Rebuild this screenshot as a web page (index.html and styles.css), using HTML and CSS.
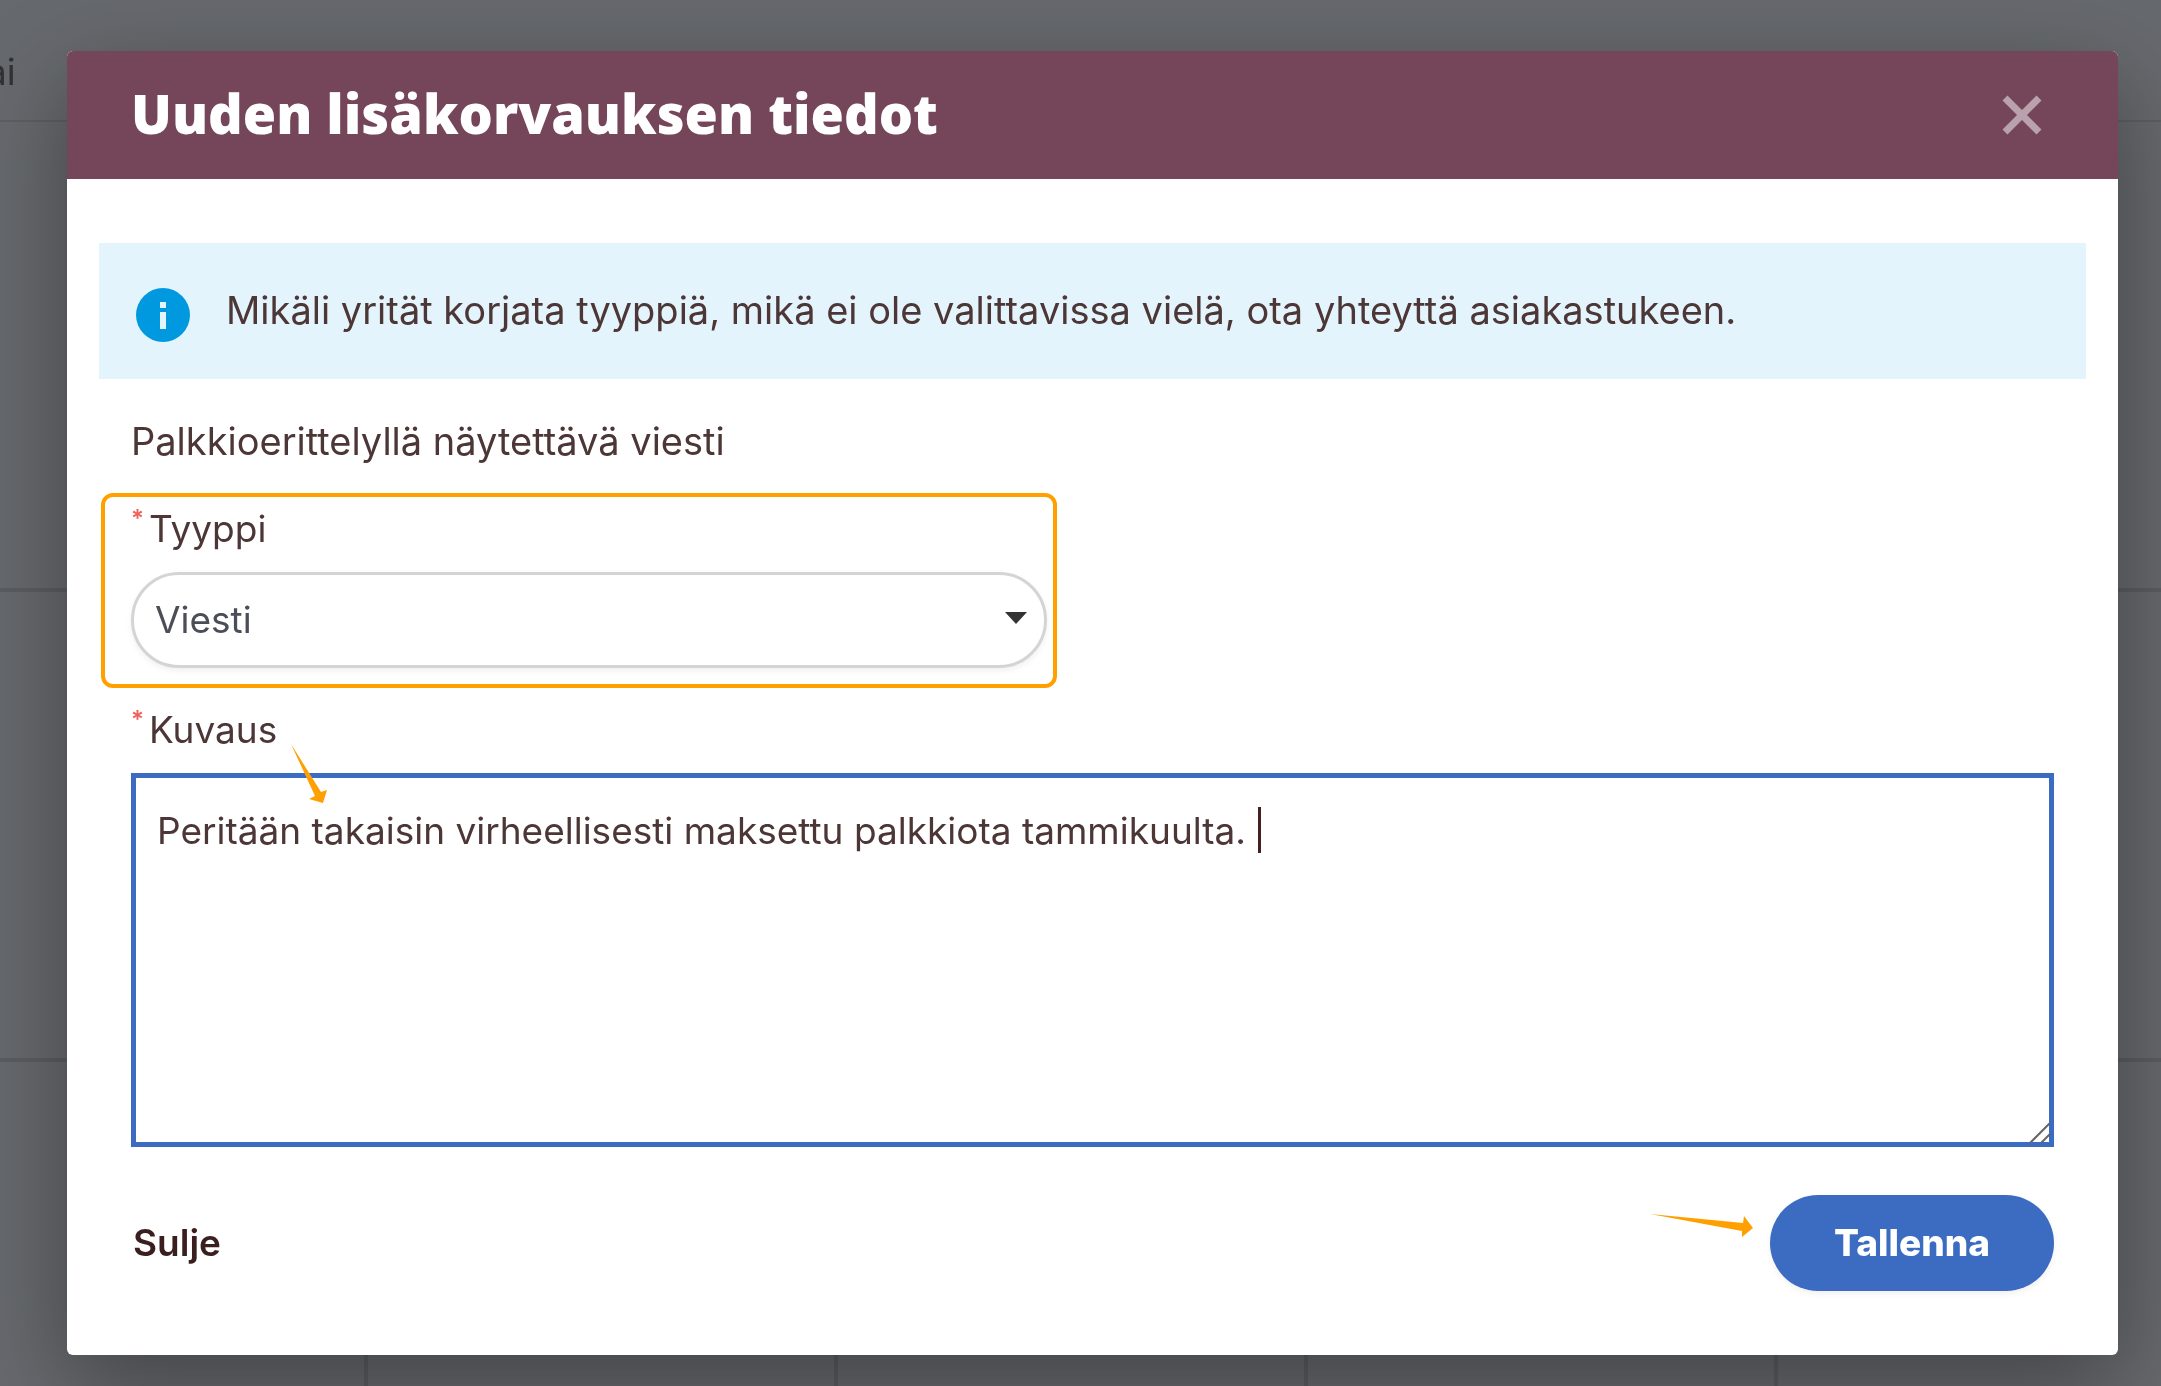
FILE: index.html
```html
<!DOCTYPE html>
<html lang="fi">
<head>
    <meta charset="UTF-8">
    <meta name="viewport" content="width=device-width, initial-scale=1.0">
    <title>Uuden lisäkorvauksen tiedot</title>
    <link rel="stylesheet" href="styles.css">
</head>
<body>
    <!-- Kalenteri taustalla -->
    <div class="calendar" aria-hidden="true">
        <div class="calendar-head"><span>ai</span></div>
        <div class="calendar-row"></div>
        <div class="calendar-row"></div>
        <div class="calendar-row calendar-days"></div>
    </div>

    <div class="modal" role="dialog" aria-labelledby="modalTitle">
        <div class="modal-header">
            <h1 id="modalTitle">Uuden lisäkorvauksen tiedot</h1>
            <button type="button" class="close" aria-label="Sulje">
                <svg viewBox="0 0 40 40" width="40" height="40">
                    <path d="M3 3 L37 37 M37 3 L3 37"/>
                </svg>
            </button>
        </div>
        <form class="modal-body">
            <div class="alert">
                <svg class="alert-icon" viewBox="0 0 54 54" width="54" height="54">
                    <circle cx="27" cy="27" r="27"/>
                    <path d="M24 14h6v6h-6z M24 24h6v17h-6z"/>
                </svg>
                <p>Mikäli yrität korjata tyyppiä, mikä ei ole valittavissa vielä, ota yhteyttä asiakastukeen.</p>
            </div>
            <p class="info">Palkkioerittelyllä näytettävä viesti</p>

            <div class="field highlight">
                <label for="type"><span class="required">*</span>Tyyppi</label>
                <div class="select">
                    <select id="type">
                        <option>Viesti</option>
                    </select>
                    <svg class="select-arrow" viewBox="0 0 22 12" width="22" height="12"><path d="M0 0h22L11 12z"/></svg>
                </div>
            </div>

            <div class="field description">
                <label for="description"><span class="required">*</span>Kuvaus</label>
                <textarea id="description">Peritään takaisin virheellisesti maksettu palkkiota tammikuulta.</textarea>
                <svg class="arrow-down" viewBox="0 0 36 60" width="36" height="60"><path d="M0 0L30 48L36 46L32 59L18 55L24 52Z"/></svg>
                <span class="caret"></span>
                <svg class="grip" viewBox="0 0 22 22" width="22" height="22"><path d="M1 21L21 1M12 21L21 12"/></svg>
            </div>

            <div class="modal-footer">
                <button type="button" class="btn-link">Sulje</button>
                <svg class="arrow-right" viewBox="0 0 104 24" width="104" height="24"><path d="M0 0L93 9L94 2L103 14L92 23L92 17Z"/></svg>
                <button type="submit" class="btn-primary">Tallenna</button>
            </div>
        </form>
    </div>
</body>
</html>
```
FILE: styles.css
```css
* {
    box-sizing: border-box;
}
body {
    margin: 0;
    min-height: 100vh;
    padding: 51px 43px 32px 67px;
    font-family: Inter, "Liberation Sans", sans-serif;
    font-size: 37px;
    line-height: 48px;
    color: #4c3636;
    background-color: #66696d;
    overflow: hidden;
}
h1, p {
    margin: 0;
}
button, select, textarea {
    font: inherit;
    color: inherit;
}

/* calendar behind the dialog */
.calendar {
    position: fixed;
    inset: 0;
    color: #303236;
}
.calendar-head {
    height: 122px;
    padding-top: 48px;
    border-bottom: 2px solid #5c5f63;
}
.calendar-head span {
    display: block;
    margin-left: -14px;
}
.calendar-row {
    height: 470px;
    border-bottom: 4px solid #5a5d61;
}
.calendar-days {
    background: repeating-linear-gradient(to right, transparent 0 466px, #5a5d61 466px 470px) -102px 0;
}

.modal {
    position: relative;
    background-color: #fff;
    border-radius: 6px;
    box-shadow: 0 32px 96px rgba(0, 0, 0, 0.35);
}
.modal-header {
    display: flex;
    align-items: center;
    justify-content: space-between;
    height: 128px;
    padding: 0 76px 0 64px;
    border-radius: 6px 6px 0 0;
    background-color: #754559;
    color: #fff;
}
.modal-header h1 {
    padding-bottom: 4px;
    font-family: "Noto Sans", sans-serif;
    font-size: 54px;
    font-weight: 900;
    line-height: 72px;
}
.close {
    display: flex;
    padding: 0;
    border: none;
    background: none;
    cursor: pointer;
}
.close path {
    fill: none;
    stroke: #baa2ac;
    stroke-width: 7;
}

.modal-body {
    padding: 64px;
}
.alert {
    display: flex;
    align-items: center;
    gap: 36px;
    height: 136px;
    margin: 0 -32px;
    padding: 8px 37px 0;
    background-color: #e4f4fc;
}
.alert p {
    padding-bottom: 10px;
}
.alert p, .info {
    font-size: 38px;
}
.alert-icon {
    flex: none;
}
.alert-icon circle {
    fill: #0099e0;
}
.alert-icon path {
    fill: #e4f4fc;
}
.info {
    margin-top: 38px;
}

.field label {
    display: flex;
    gap: 5px;
}
.required {
    font-size: 24px;
    font-weight: 600;
    line-height: 28px;
    color: #f0605c;
}
.highlight {
    width: 956px;
    max-width: 100%;
    margin: 28px 0 0 -30px;
    padding: 8px 6px 16px 26px;
    border: 4px solid #ffa000;
    border-radius: 12px;
}
.select {
    position: relative;
    margin-top: 19px;
}
.select select {
    display: block;
    width: 100%;
    height: 96px;
    padding: 0 21px;
    border: 3px solid #d4d4d4;
    border-radius: 48px;
    background-color: #fff;
    color: #4b4d57;
    box-shadow: 0 3px 6px rgba(0, 0, 0, 0.06);
    appearance: none;
}
.select-arrow {
    position: absolute;
    top: 40px;
    right: 20px;
    fill: #333;
    pointer-events: none;
}
.description {
    position: relative;
    margin-top: 18px;
}
.description textarea {
    display: block;
    width: 100%;
    height: 374px;
    margin-top: 19px;
    padding: 29px 21px;
    border: 5px solid #3b6cc1;
    background-color: #fff;
    outline: none;
    resize: none;
}
.caret {
    position: absolute;
    top: 101px;
    left: 1127px;
    width: 3px;
    height: 46px;
    background-color: #442020;
}
.grip {
    position: absolute;
    right: 3px;
    bottom: 3px;
    fill: none;
    stroke: #666;
    stroke-width: 2;
    pointer-events: none;
}
.arrow-down {
    position: absolute;
    top: 38px;
    left: 160px;
    fill: #ffa000;
}

.modal-footer {
    display: flex;
    align-items: center;
    margin-top: 48px;
}
.btn-link {
    padding: 0 2px;
    border: none;
    background: none;
    font-weight: 600;
    color: #3b1e1e;
    cursor: pointer;
}
.arrow-right {
    margin: 0 16px 34px auto;
    fill: #ffa000;
}
.btn-primary {
    height: 96px;
    padding: 0 64px;
    border: none;
    border-radius: 48px;
    background-color: #3b6cc1;
    font-weight: 800;
    color: #fff;
    box-shadow: 0 3px 6px rgba(0, 0, 0, 0.06);
    cursor: pointer;
}
```
